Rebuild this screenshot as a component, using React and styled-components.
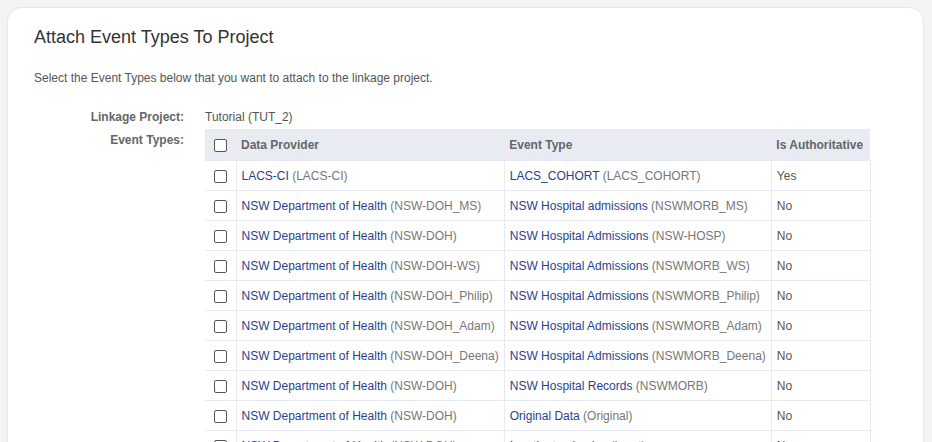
import React from 'react'
import styled, { createGlobalStyle } from 'styled-components'

const GlobalStyle = createGlobalStyle`
  html, body {
    margin: 0;
    padding: 0;
    background: #f4f4f6;
    font-family: "Liberation Sans", Arial, sans-serif;
    overflow: hidden;
  }
`

const Page = styled.div`
  padding: 7px 8px 0 7px;
  height: 442px;
  box-sizing: border-box;
`

const Card = styled.div`
  background: #fff;
  border: 1px solid #e7e7ea;
  border-radius: 14px;
  padding: 18px 26px 40px 26px;
  min-height: 600px;
`

const Title = styled.h2`
  margin: 0;
  font-size: 18px;
  font-weight: 400;
  line-height: 22px;
  color: #333;
`

const Intro = styled.p`
  margin: 22px 0 0;
  font-size: 12px;
  line-height: 16px;
  color: #555;
`

const Form = styled.div`
  display: grid;
  grid-template-columns: 150px auto;
  column-gap: 21px;
  row-gap: 4px;
  margin-top: 23px;
  justify-content: start;
`

const Label = styled.div`
  text-align: right;
  font-size: 12px;
  line-height: 16px;
  font-weight: 700;
  color: #666;
  padding-top: ${p => p.$top || 0}px;
`

const Value = styled.div`
  font-size: 12px;
  line-height: 16px;
  color: #555;
`

const Table = styled.table`
  border-collapse: collapse;
  font-size: 12px;
  color: #555;
`

const Th = styled.th`
  background: #e8ecf2;
  height: 31px;
  padding: 0 5px;
  text-align: left;
  font-weight: 700;
  color: #666;
  width: ${p => p.$w}px;
  white-space: nowrap;
`

const Td = styled.td`
  height: 29px;
  padding: 0 5px;
  border: 1px solid #e6eaf0;
  white-space: nowrap;
  &:first-child { border-left: none; }
`

const CheckCell = styled(Td)`
  text-align: center;
  padding: 0;
`

const Box = styled.span`
  display: inline-block;
  width: 11px;
  height: 11px;
  border: 1px solid #555;
  border-radius: 2px;
  vertical-align: middle;
  background: #fff;
`

const Link = styled.span`
  color: #2b3f8c;
`

const Code = styled.span`
  color: #777;
`

const rows = [
  ['LACS-CI', 'LACS-CI', 'LACS_COHORT', 'LACS_COHORT', 'Yes'],
  ['NSW Department of Health', 'NSW-DOH_MS', 'NSW Hospital admissions', 'NSWMORB_MS', 'No'],
  ['NSW Department of Health', 'NSW-DOH', 'NSW Hospital Admissions', 'NSW-HOSP', 'No'],
  ['NSW Department of Health', 'NSW-DOH-WS', 'NSW Hospital Admissions', 'NSWMORB_WS', 'No'],
  ['NSW Department of Health', 'NSW-DOH_Philip', 'NSW Hospital Admissions', 'NSWMORB_Philip', 'No'],
  ['NSW Department of Health', 'NSW-DOH_Adam', 'NSW Hospital Admissions', 'NSWMORB_Adam', 'No'],
  ['NSW Department of Health', 'NSW-DOH_Deena', 'NSW Hospital Admissions', 'NSWMORB_Deena', 'No'],
  ['NSW Department of Health', 'NSW-DOH', 'NSW Hospital Records', 'NSWMORB', 'No'],
  ['NSW Department of Health', 'NSW-DOH', 'Original Data', 'Original', 'No'],
  ['NSW Department of Health', 'NSW-DOH', 'Inpatient episodes', 'Inpat', 'No'],
]

export default function App() {
  return (
    <Page>
      <GlobalStyle />
      <Card>
        <Title>Attach Event Types To Project</Title>
        <Intro>Select the Event Types below that you want to attach to the linkage project.</Intro>
        <Form>
          <Label>Linkage Project:</Label>
          <Value>Tutorial (TUT_2)</Value>
          <Label $top={3}>Event Types:</Label>
          <Table>
            <thead>
              <tr>
                <Th $w={31} style={{ textAlign: 'center', padding: 0 }}><Box /></Th>
                <Th $w={258}>Data Provider</Th>
                <Th $w={257}>Event Type</Th>
                <Th $w={89}>Is Authoritative</Th>
              </tr>
            </thead>
            <tbody>
              {rows.map((r, i) => (
                <tr key={i}>
                  <CheckCell><Box /></CheckCell>
                  <Td><Link>{r[0]}</Link> <Code>({r[1]})</Code></Td>
                  <Td><Link>{r[2]}</Link> <Code>({r[3]})</Code></Td>
                  <Td>{r[4]}</Td>
                </tr>
              ))}
            </tbody>
          </Table>
        </Form>
      </Card>
    </Page>
  )
}
